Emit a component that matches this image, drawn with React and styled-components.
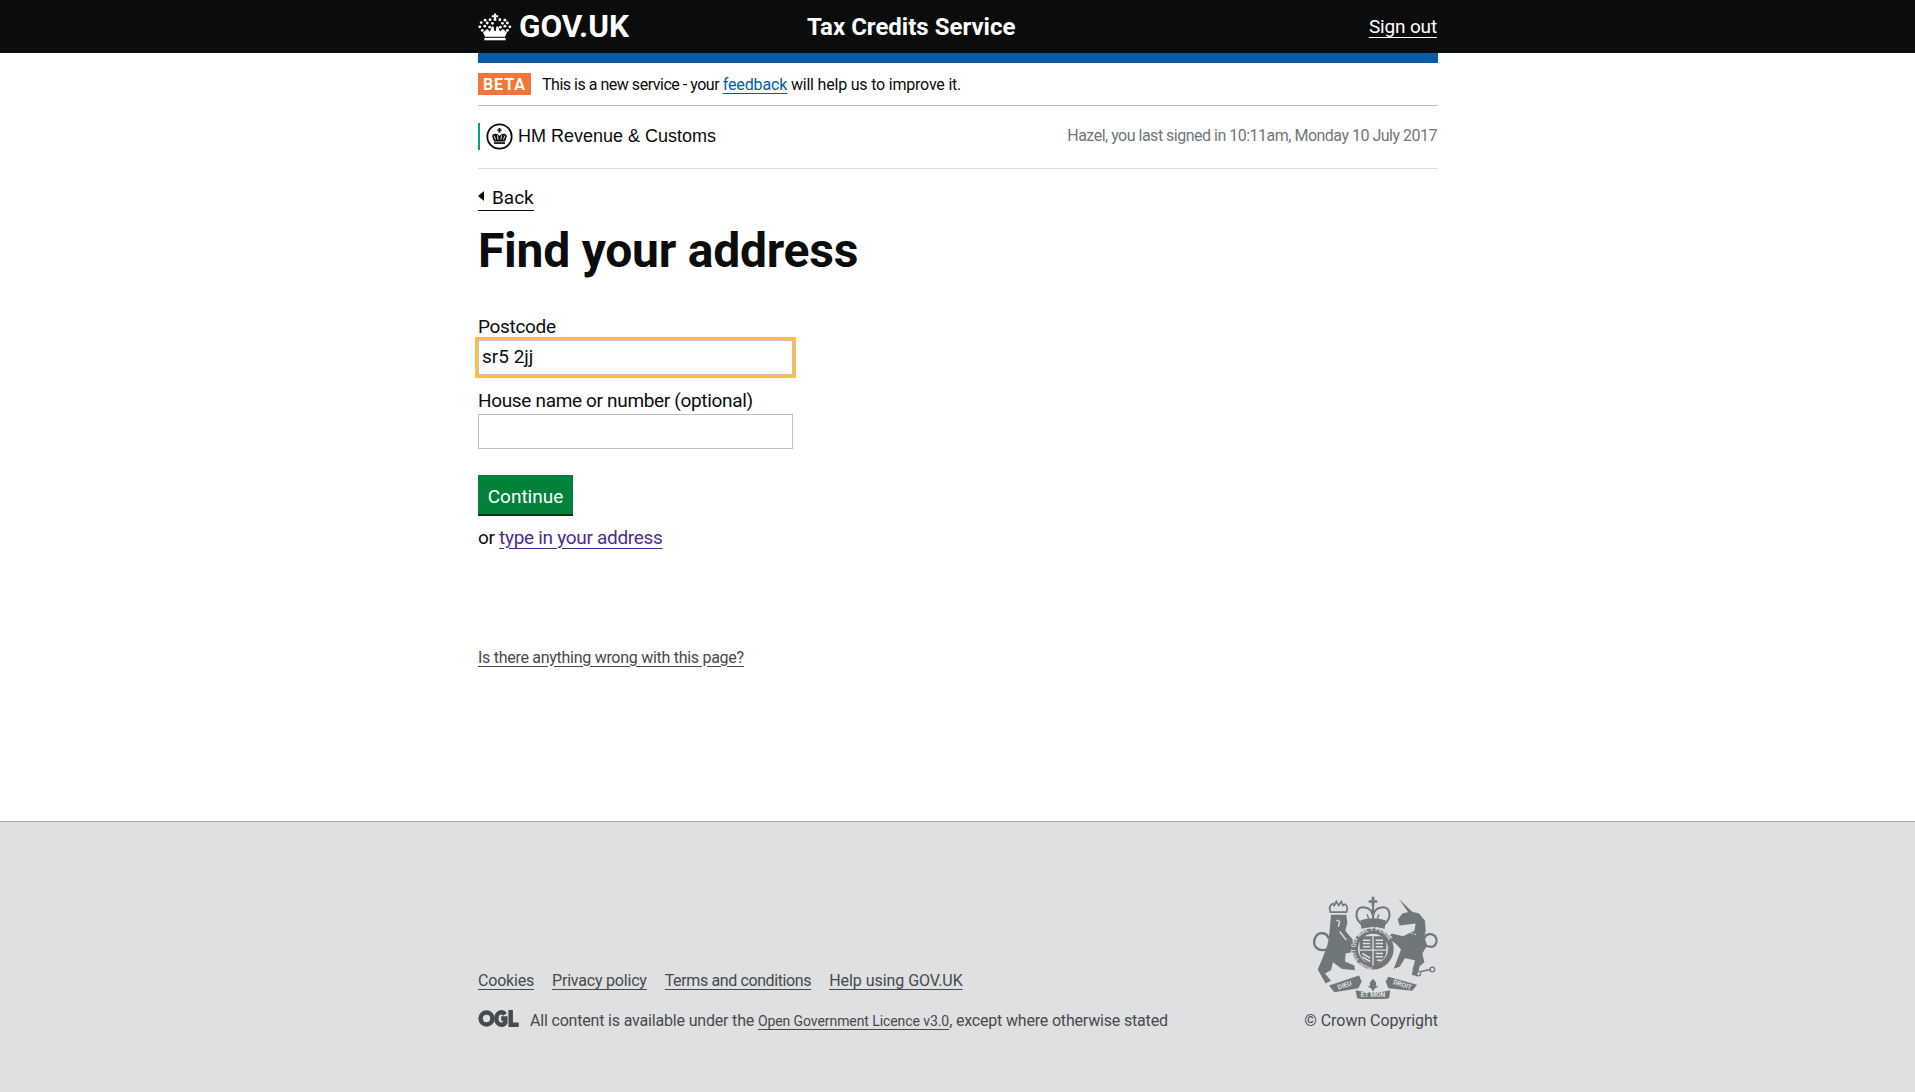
import React from 'react'
import styled, { createGlobalStyle } from 'styled-components'

const FONT = '"Roboto", "Liberation Sans", Arial, sans-serif'

const GlobalStyle = createGlobalStyle`
  html, body {
    margin: 0;
    padding: 0;
    background: #fff;
    color: #0b0c0c;
    font-family: ${FONT};
  }
  * { box-sizing: border-box; }
`

const Page = styled.div`
  min-height: 1092px;
  display: flex;
  flex-direction: column;
`

const Header = styled.header`
  height: 53px;
  background: #0b0c0c;
  color: #fff;
`

const Wrap = styled.div`
  width: 960px;
  margin-left: 478px;
`

const HeaderRow = styled(Wrap)`
  height: 53px;
  display: flex;
  align-items: center;
`

const Logo = styled.a`
  width: 329px;
  display: flex;
  align-items: center;
  gap: 7px;
  font-size: 31.5px;
  font-weight: 700;
  color: #fff;
`

const ServiceName = styled.div`
  flex: 1;
  font-size: 24px;
  font-weight: 700;
`

const SignOut = styled.a`
  font-size: 19px;
  letter-spacing: -0.15px;
  color: #fff;
  margin-right: 1px;
  text-decoration: underline;
  text-underline-offset: 4px;
`

const BlueBar = styled(Wrap)`
  height: 10px;
  background: #005ea5;
`

const BetaRow = styled(Wrap)`
  height: 43px;
  display: flex;
  align-items: center;
  gap: 11px;
  border-bottom: 1px solid #bfc1c3;
  font-size: 16px;
  letter-spacing: -0.48px;
`

const BetaTag = styled.strong`
  width: 53px;
  height: 22px;
  display: flex;
  align-items: center;
  justify-content: center;
  background: #f47738;
  color: #fff;
  font-size: 16px;
  letter-spacing: 1px;
`

const BlueLink = styled.a`
  color: #005ea5;
  letter-spacing: -0.1px;
  text-decoration: underline;
  text-underline-offset: 3px;
`

const BetaTail = styled.span`
  letter-spacing: -0.2px;
`

const OrgRow = styled(Wrap)`
  height: 63px;
  display: flex;
  align-items: center;
  justify-content: space-between;
  border-bottom: 1px solid #dee0e2;
`

const OrgName = styled.div`
  display: flex;
  align-items: center;
  gap: 5px;
  height: 27px;
  padding-left: 6px;
  margin-top: -2px;
  border-left: 2px solid #00a192;
  font-family: "Liberation Sans", Arial, sans-serif;
  font-size: 18px;
`

const LastSigned = styled.div`
  font-size: 16px;
  letter-spacing: -0.5px;
  color: #6f777b;
  margin-right: 1px;
  margin-top: -4px;
`

const Main = styled(Wrap)`
  flex: 1;
  padding-top: 17px;
`

const BackLink = styled.a`
  display: inline-flex;
  align-items: center;
  gap: 8px;
  height: 24px;
  padding-bottom: 2px;
  font-size: 19px;
  color: #0b0c0c;
  border-bottom: 1px solid #0b0c0c;
  &::before {
    content: '';
    width: 0;
    height: 0;
    margin-top: -2px;
    border-top: 5px solid transparent;
    border-bottom: 5px solid transparent;
    border-right: 6px solid #0b0c0c;
  }
`

const Title = styled.h1`
  margin: 12px 0 36px;
  font-size: 48px;
  line-height: 56px;
  font-weight: 700;
  letter-spacing: -0.25px;
`

const Field = styled.div`
  margin-bottom: 14px;
`

const Label = styled.label`
  display: block;
  font-size: 19px;
  line-height: 24px;
  letter-spacing: -0.33px;
  margin-bottom: 1px;
`

const TextInput = styled.input`
  display: block;
  width: 315px;
  height: 35px;
  padding: 0 3px 1px;
  border: 1px solid #bfc1c3;
  outline: ${(props) => (props.$focused ? '3px solid #ffbf47' : 'none')};
  font-family: ${FONT};
  font-size: 19px;
  color: #0b0c0c;
`

const ContinueButton = styled.button`
  display: block;
  width: 95px;
  height: 41px;
  margin-top: 26px;
  padding: 2px 0 0;
  border: 0;
  background: #00823b;
  box-shadow: inset 0 -2px 0 #003618;
  color: #fff;
  font-family: ${FONT};
  font-size: 19px;
`

const OrRow = styled.p`
  margin: 10px 0 0;
  font-size: 19px;
  line-height: 24px;
  letter-spacing: -0.3px;
`

const VisitedLink = styled.a`
  color: #4c2c92;
  text-decoration: underline;
  text-underline-offset: 4px;
`

const ProblemLink = styled.a`
  display: inline-block;
  margin-top: 97px;
  font-size: 16px;
  line-height: 22px;
  letter-spacing: -0.28px;
  color: #454a4c;
  text-decoration: underline;
  text-underline-offset: 3px;
`

const Footer = styled.footer`
  height: 271px;
  background: #dee0e2;
  border-top: 1px solid #a1acb2;
`

const FooterRow = styled(Wrap)`
  height: 100%;
  display: flex;
  justify-content: space-between;
  align-items: flex-end;
  padding-bottom: 60px;
  font-size: 16px;
  color: #454a4c;
`

const FooterLinks = styled.div`
  display: flex;
  gap: 18px;
  margin-bottom: 20px;
`

const FooterLink = styled.a`
  color: #454a4c;
  letter-spacing: ${(props) => props.$spacing || '-0.2px'};
  text-decoration: underline;
  text-underline-offset: 3px;
`

const Licence = styled.div`
  display: flex;
  align-items: center;
  gap: 9px;
  line-height: 22px;
  letter-spacing: -0.18px;
`

const SmallLink = styled(FooterLink)`
  font-size: 14px;
`

const LicenceMark = styled.svg`
  margin-top: -5px;
`

const CopyrightBlock = styled.div`
  display: flex;
  flex-direction: column;
  align-items: flex-end;
  gap: 11px;
  line-height: 22px;
  letter-spacing: -0.05px;
`

function CrownLogo() {
  const dots = [
    [33, 50], [29, 62], [36, 72], [43, 60], [50, 51], [44, 43], [58, 42], [65, 52], [72, 41],
    [86, 42], [93, 52], [100, 43], [107, 51], [114, 62], [107, 72], [100, 60], [57, 63], [87, 63],
  ]
  return (
    <svg width="34" height="29" viewBox="24 20 96 82" fill="#fff" aria-hidden="true">
      <path d="M69 24h6v5h6v6h-6v9h-6v-9h-6v-6h6z" />
      {dots.map(([x, y]) => (
        <circle key={x + '-' + y} cx={x} cy={y} r="4" />
      ))}
      <path d="M38 78l12-10 8 7 5-14h5l2 13h4l2-13h5l5 14 8-7 12 10-6 12H44z" />
      <rect x="42" y="93" width="60" height="7" />
    </svg>
  )
}

function OrgCrest() {
  return (
    <svg width="27" height="27" viewBox="0 0 27 27" aria-hidden="true">
      <circle cx="13.5" cy="13.5" r="12.2" fill="#fff" stroke="#0b0c0c" strokeWidth="1.8" />
      <path d="M12.6 5h1.8v1.4h1.4v1.4h-1.4v1.6h-1.8V7.8h-1.4V6.4h1.4z" fill="#0b0c0c" />
      <path
        d="M8 18.6l-1.8-5c-.5-1.8 1.6-3.3 3.6-2.9 1.6.3 3 1.1 3.7 2.3.7-1.2 2.1-2 3.7-2.3 2-.4 4.1 1.1 3.6 2.9l-1.8 5z"
        fill="#0b0c0c"
      />
      <path d="M8 12.6l1.6 4M11.5 12.4l.6 4.2M15.5 12.4l-.6 4.2M19 12.6l-1.6 4" stroke="#fff" strokeWidth=".9" />
      <rect x="8" y="19.2" width="11" height="1.7" fill="#0b0c0c" />
    </svg>
  )
}

function OglLogo() {
  return (
    <LicenceMark width="43" height="17" viewBox="0 0 43 19" fill="none" stroke="#454a4c" strokeWidth="5" aria-hidden="true">
      <circle cx="7" cy="9.5" r="6.6" />
      <path d="M27.5 5c-1-1.6-2.4-2.4-3.8-2.4-3.6 0-5.8 3-5.8 6.9 0 3.9 2.2 6.9 5.8 6.9 2 0 3.6-.9 4.3-2.6V9.6h-4.6" />
      <path d="M34 0v16.4H43" />
    </LicenceMark>
  )
}

function RoyalArms() {
  const ink = '#6f777b'
  const paper = '#dee0e2'
  return (
    <svg width="125" height="103" viewBox="70 50 375 308" aria-label="Royal coat of arms">
      <defs>
        <path id="garter-ring" d="M250 262a54 54 0 1 1 .1 0" />
      </defs>
      {/* centre crown */}
      <path d="M246 52h8v10h9v8h-9v12h-8V70h-9v-8h9z" fill={ink} />
      <path
        d="M215 134c-24-22-16-54 10-50 13 2 23 10 25 26 2-16 12-24 25-26 26-4 34 28 10 50"
        fill="none"
        stroke={ink}
        strokeWidth="6"
      />
      <path d="M250 82v46" stroke={ink} strokeWidth="6" />
      <path d="M212 122q38-12 76 0l-3 26q-35-10-70 0z" fill={ink} />
      <path d="M232 104l6 16M268 104l-6 16" stroke={ink} strokeWidth="4" />

      {/* lion */}
      <path
        d="M122 98c-4-12 0-22 8-26l4 6 6-12 7 12 8-12 5 12 6-4c8 6 8 16 4 24z"
        fill="none"
        stroke={ink}
        strokeWidth="5"
      />
      <path
        d="M124 106h46l3 24-6 24 22 26 9 36-30 6-2 24 28 12 2 14-40-4-26-20-6 24-18 10 18 22-16 8-24-42 14-32 16-44 6-40z"
        fill={ink}
      />
      <path d="M140 122l10 4-4 16M150 156l20 26" fill="none" stroke={paper} strokeWidth="4" />
      <path
        d="M116 208c-36 14-50-14-38-36 10-16 34-14 38 4"
        fill="none"
        stroke={ink}
        strokeWidth="7"
      />

      {/* unicorn */}
      <path d="M327 58l46 44-9 8z" fill={ink} />
      <path
        d="M364 96l24 6 18 22 2 30-4 18 8 26-14 24 6 26-14 12-8 30-16-4 6-26 4-18-30-6-16 26-18 6 10-26 12-32-14-16-24-18 10-14 34 8 34-16 4-22-18 2-30 4-6-18 14-18z"
        fill={ink}
      />
      <path d="M340 152l40 14" stroke={paper} strokeWidth="3" strokeDasharray="5 4" />
      <path
        d="M402 194c34 22 46-8 34-24-8-10-28-8-32 6"
        fill="none"
        stroke={ink}
        strokeWidth="7"
      />
      <g fill="none" stroke={ink} strokeWidth="4">
        <circle cx="378" cy="268" r="7" />
        <circle cx="386" cy="282" r="7" />
        <circle cx="428" cy="270" r="7" />
        <path d="M394 276l28-6" />
      </g>

      {/* garter and shield */}
      <circle cx="250" cy="208" r="62" fill={ink} />
      <circle cx="250" cy="208" r="45" fill={paper} />
      <text fill={paper} fontFamily={FONT} fontSize="17" fontWeight="700">
        <textPath href="#garter-ring" startOffset="3">
          HONI SOIT QUI MAL Y PENSE
        </textPath>
      </text>
      <path d="M210 170h80v44c0 24-20 36-40 44-20-8-40-20-40-44z" fill={ink} />
      <path d="M250 170v88M210 212h80" stroke={paper} strokeWidth="4" />
      <g fill="none" stroke={paper} strokeWidth="4.5">
        <path d="M220 182h22M220 192h22M220 202h22" />
        <path d="M258 182h22M258 192h22M258 202h22" />
        <path d="M218 222l24 14M218 232l24 14" />
        <path d="M258 222h22M258 232h22M262 242h14" />
      </g>

      {/* motto */}
      <path d="M118 318l90-30 8 18-10 20-72 12z" fill={ink} />
      <path d="M296 292l86 24-14 18-72-8-8-20z" fill={ink} />
      <path d="M198 332q52 14 104 0l-4 24q-48 8-96 0z" fill={ink} />
      <path d="M250 298c8 8 12 14 8 20l8 4-10 4-6 10-6-10-10-4 8-4c-4-6 0-12 8-20z" fill={ink} />
      <g fill={paper} fontFamily={FONT} fontSize="20" fontWeight="700" textAnchor="middle">
        <text x="165" y="324" transform="rotate(-20 165 318)">DIEU</text>
        <text x="338" y="322" transform="rotate(18 338 316)">DROIT</text>
        <text x="250" y="352">ET MON</text>
      </g>
    </svg>
  )
}

export default function App() {
  return (
    <Page>
      <GlobalStyle />
      <Header>
        <HeaderRow>
          <Logo>
            <CrownLogo />
            GOV.UK
          </Logo>
          <ServiceName>Tax Credits Service</ServiceName>
          <SignOut>Sign out</SignOut>
        </HeaderRow>
      </Header>
      <BlueBar />
      <BetaRow>
        <BetaTag>BETA</BetaTag>
        <span>
          This is a new service - your <BlueLink>feedback</BlueLink> <BetaTail>will help us to improve it.</BetaTail>
        </span>
      </BetaRow>
      <OrgRow>
        <OrgName>
          <OrgCrest />
          HM Revenue &amp; Customs
        </OrgName>
        <LastSigned>Hazel, you last signed in 10:11am, Monday 10 July 2017</LastSigned>
      </OrgRow>
      <Main>
        <BackLink>Back</BackLink>
        <Title>Find your address</Title>
        <Field>
          <Label>Postcode</Label>
          <TextInput $focused defaultValue="sr5 2jj" />
        </Field>
        <Field>
          <Label>House name or number (optional)</Label>
          <TextInput />
        </Field>
        <ContinueButton>Continue</ContinueButton>
        <OrRow>
          or <VisitedLink>type in your address</VisitedLink>
        </OrRow>
        <ProblemLink>Is there anything wrong with this page?</ProblemLink>
      </Main>
      <Footer>
        <FooterRow>
          <div>
            <FooterLinks>
              <FooterLink>Cookies</FooterLink>
              <FooterLink>Privacy policy</FooterLink>
              <FooterLink $spacing="-0.38px">Terms and conditions</FooterLink>
              <FooterLink $spacing="-0.05px">Help using GOV.UK</FooterLink>
            </FooterLinks>
            <Licence>
              <OglLogo />
              <span>
                All content is available under the <SmallLink $spacing="-0.08px">Open Government Licence v3.0</SmallLink>,
                except where otherwise stated
              </span>
            </Licence>
          </div>
          <CopyrightBlock>
            <RoyalArms />© Crown Copyright
          </CopyrightBlock>
        </FooterRow>
      </Footer>
    </Page>
  )
}
